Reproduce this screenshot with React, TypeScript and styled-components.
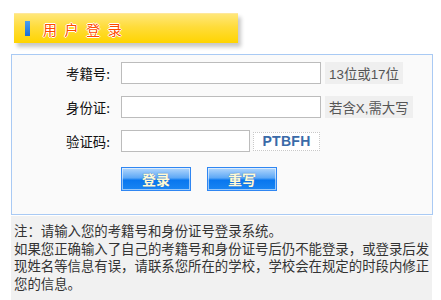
import { createGlobalStyle } from "styled-components";
import styled from "styled-components";

const GlobalStyle = createGlobalStyle`
  html, body {
    margin: 0;
    padding: 0;
    background: #ffffff;
  }
  body {
    font-family: "Liberation Sans", "Noto Sans CJK SC", sans-serif;
    font-size: 13.4px;
    color: #222;
  }
`;

const Page = styled.div`
  width: 441px;
  height: 300px;
  overflow: hidden;
  display: flex;
  flex-direction: column;
`;

const TitleBar = styled.div`
  margin: 13px 0 0 14px;
  width: 224px;
  height: 30px;
  box-sizing: border-box;
  display: flex;
  align-items: center;
  padding-left: 11px;
  background: linear-gradient(#ffe77a 0%, #ffdc3a 45%, #ffd400 100%);
  border-top: 1px solid #ffe89a;
  box-shadow: 3px 4px 4px rgba(0, 0, 0, 0.22);
`;

const TitleMark = styled.span`
  width: 5px;
  height: 15px;
  background: linear-gradient(#4aa0f0, #1c6fd8);
  margin-right: 13px;
`;

const TitleText = styled.span`
  font-family: "Noto Sans CJK SC", sans-serif;
  font-size: 14px;
  letter-spacing: 7.6px;
  color: #ff4a00;
  text-shadow: 1px 0 0 #fff, -1px 0 0 #fff, 0 1px 0 #fff, 0 -1px 0 #fff;
`;

const Panel = styled.form`
  margin: 11px 0 0 11px;
  width: 422px;
  box-sizing: border-box;
  border: 1px solid #a9caf4;
  background: #fafafa;
  padding: 7px 0 23px 0;
  display: flex;
  flex-direction: column;
  gap: 12px;
`;

const Row = styled.div`
  display: flex;
  align-items: center;
  height: 22px;
`;

const Label = styled.label`
  width: 98px;
  text-align: right;
  margin-right: 11px;
  font-family: "Noto Sans CJK SC", sans-serif;
  color: #111;
`;

const Input = styled.input<{ $w: number }>`
  width: ${(p) => p.$w}px;
  height: 22px;
  box-sizing: border-box;
  border: 1px solid #bcbcbc;
  background: #fff;
  padding: 0 3px;
  margin: 0;
  outline: none;
`;

const Hint = styled.span`
  margin-left: 4px;
  height: 22px;
  display: flex;
  align-items: center;
  padding: 0 4px;
  background: #efefef;
  color: #555;
  font-family: "Liberation Sans", "Noto Sans CJK SC", sans-serif;
  font-size: 13.4px;
`;

const Captcha = styled.span`
  margin-left: 3px;
  width: 67px;
  height: 19px;
  box-sizing: border-box;
  border: 1px dotted #c8c8c8;
  background: #fff;
  display: flex;
  align-items: center;
  justify-content: center;
  font-family: "Liberation Sans", sans-serif;
  font-weight: bold;
  font-size: 14px;
  letter-spacing: 0.3px;
  color: #3a6aa8;
`;

const Actions = styled.div`
  display: flex;
  gap: 16px;
  padding-left: 109px;
  margin-top: 3px;
`;

const Button = styled.button`
  width: 70px;
  height: 24px;
  box-sizing: border-box;
  border: 1px solid #2f86f2;
  box-shadow: inset 0 0 0 1px rgba(255, 255, 255, 0.55);
  background: linear-gradient(#b3d7fc 0%, #5da8f6 45%, #0877ef 55%, #1a86f3 100%);
  color: #fffbd6;
  font-family: "Noto Sans CJK SC", sans-serif;
  font-size: 14px;
  font-weight: bold;
  text-shadow: 0 0 1px #2a5fb0;
  padding: 0;
  cursor: pointer;
`;

const Note = styled.div`
  margin: 1px 0 0 11px;
  width: 421px;
  flex: 1;
  background: #f1f1f1;
  padding: 6px 0 0 3px;
  box-sizing: border-box;
  font-family: "Noto Sans CJK SC", sans-serif;
  font-size: 13.4px;
  line-height: 17.5px;
  color: #333;
`;

export default function App() {
  return (
    <Page>
      <GlobalStyle />
      <TitleBar>
        <TitleMark />
        <TitleText>用户登录</TitleText>
      </TitleBar>
      <Panel onSubmit={(e) => e.preventDefault()}>
        <Row>
          <Label>考籍号:</Label>
          <Input $w={200} />
          <Hint>13位或17位</Hint>
        </Row>
        <Row>
          <Label>身份证:</Label>
          <Input $w={200} />
          <Hint>若含X,需大写</Hint>
        </Row>
        <Row>
          <Label>验证码:</Label>
          <Input $w={129} />
          <Captcha>PTBFH</Captcha>
        </Row>
        <Actions>
          <Button type="submit">登录</Button>
          <Button type="reset">重写</Button>
        </Actions>
      </Panel>
      <Note>
        注：请输入您的考籍号和身份证号登录系统。
        <br />
        如果您正确输入了自己的考籍号和身份证号后仍不能登录，或登录后发现姓名等信息有误，请联系您所在的学校，学校会在规定的时段内修正您的信息。
      </Note>
    </Page>
  );
}
